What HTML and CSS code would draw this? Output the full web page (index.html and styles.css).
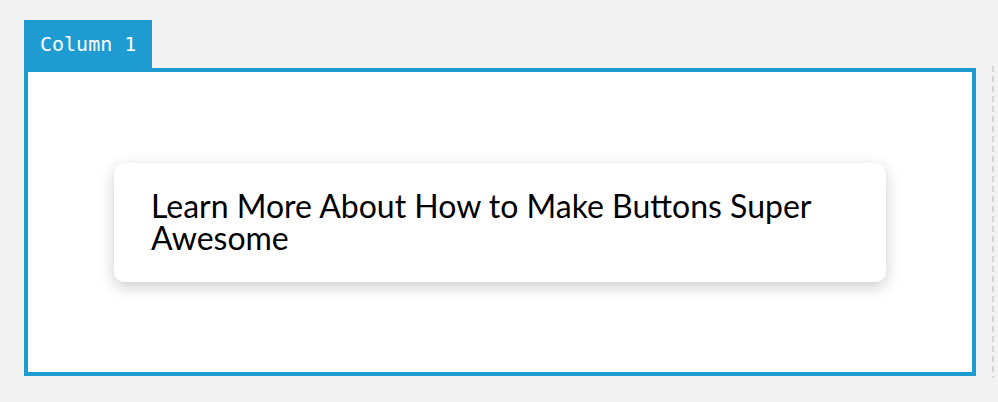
FILE: index.html
```html
<!DOCTYPE html>
<html lang="en">
<head>
    <meta charset="UTF-8">
    <meta name="viewport" content="width=device-width, initial-scale=1.0">
    <title>Column 1</title>
    <link rel="stylesheet" href="styles.css">
</head>
<body>
    <div class="row">
        <div class="column">
            <div class="column-tab">Column 1</div>
            <div class="column-body">
                <div class="card">
                    <p class="card-title">Learn More About How to Make Buttons Super Awesome</p>
                </div>
            </div>
        </div>
        <div class="divider"></div>
    </div>
</body>
</html>
```

FILE: styles.css
```css
body {
    margin: 0;
    padding: 0;
    background-color: #f2f2f2;
    font-family: Lato, "Open Sans", sans-serif;
}

.row {
    display: flex;
    padding: 20px 0 0 24px;
}

.column {
    width: 952px;
    display: flex;
    flex-direction: column;
}

.column-tab {
    align-self: flex-start;
    background-color: #1e9cd2;
    color: #fff;
    font-family: "DejaVu Sans Mono", monospace;
    font-size: 20px;
    line-height: 24px;
    padding: 12px 16px;
}

.column-body {
    height: 300px;
    border: 4px solid #1e9cd2;
    background-color: #fff;
    display: flex;
    align-items: center;
    justify-content: center;
}

.card {
    width: 772px;
    box-sizing: border-box;
    padding: 27px 37px 28px;
    background-color: #fff;
    border-radius: 10px;
    box-shadow: 0 5px 16px rgba(0, 0, 0, 0.2);
}

.card-title {
    margin: 0;
    font-size: 32px;
    line-height: 32px;
    color: #000;
}

.divider {
    width: 2px;
    height: 312px;
    margin: 46px 0 0 16px;
    background: repeating-linear-gradient(to bottom, #d6d6d6 0, #d6d6d6 6px, transparent 6px, transparent 10px);
}
```
